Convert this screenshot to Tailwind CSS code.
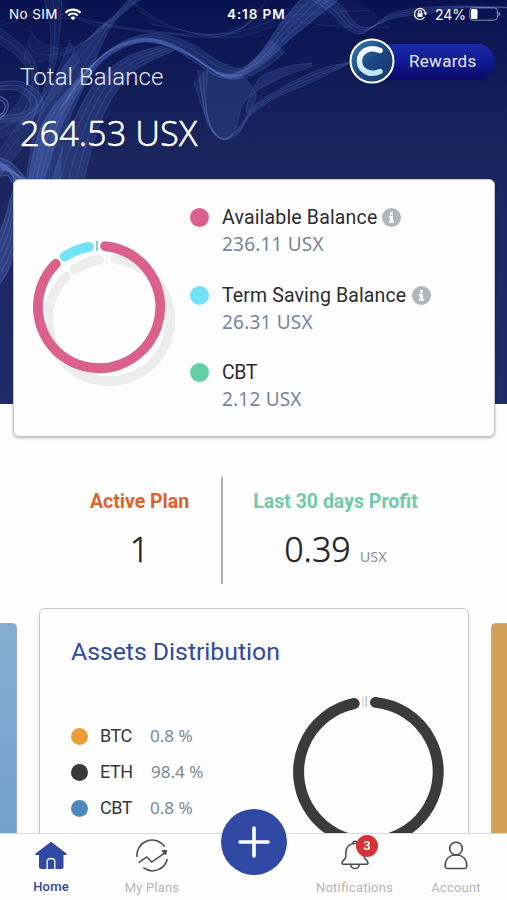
<!DOCTYPE html>
<html lang="en">
<head>
<meta charset="utf-8">
<title>Total Balance</title>
<script src="https://cdn.jsdelivr.net/npm/@tailwindcss/browser@4"></script>
</head>
<body class="bg-white">
<div class="relative flex h-[900px] w-[507px] flex-col overflow-hidden bg-[#fefefe] font-['Roboto',sans-serif]">

  <header class="relative h-[404px] shrink-0 bg-linear-to-b from-[#08124f] via-[#1a255e] via-38% to-[#202c68]">
    <!-- smoke backdrop: bundles of strands, each blended between two guide curves -->
    <svg id="smoke" class="absolute inset-0 blur-[0.7px]" width="507" height="404" viewBox="0 0 507 404" fill="none" stroke="#86a4f0" stroke-width="1.3"></svg>

    <div class="relative flex h-[28px] items-center text-[14px] text-white">
      <span class="ml-[9px] w-[55px] whitespace-nowrap font-['Inter',sans-serif] text-[13.5px] tracking-[0.4px]">No SIM</span>
      <svg width="18" height="13" viewBox="0 0 17 13" fill="none" stroke="#fff" stroke-width="2.1"><path d="M1 4.700a10.600 10.600 0 0 1 15 0M3.700 7.500a6.800 6.800 0 0 1 9.600 0"/><path d="M8.500 12.300L6 9.700a3.500 3.500 0 0 1 5 0Z" fill="#fff" stroke="none"/></svg>
      <span class="ml-[145px] w-[60px] whitespace-nowrap font-['Inter',sans-serif] text-[13.5px] font-semibold tracking-[0.9px]">4:18 PM</span>
      <svg class="ml-[126px]" width="15" height="14" viewBox="0 0 15 14" fill="none" stroke="#fff" stroke-width="1.2"><path d="M11.600 10A5.500 5.500 0 1 1 12.400 6"/><path d="M10.500 5.800h4l-2 2.600z" fill="#fff" stroke="none"/><rect x="4.500" y="6.200" width="5" height="3.800" fill="#fff" stroke="none"/><path d="M5.500 6.500V5.200a1.500 1.500 0 0 1 3 0v1.300"/></svg>
      <span class="ml-[7px] w-[34px] whitespace-nowrap font-['Inter',sans-serif] text-[14px]">24%</span>
      <svg width="32" height="14" viewBox="0 0 32 14"><rect x=".8" y=".8" width="27.500" height="12.400" rx="3" fill="none" stroke="#8890ad"/><rect x="2" y="2" width="6.500" height="10" rx="1.500" fill="#fff"/><path d="M29.500 4.800q2 .4 2 2.200t-2 2.200z" fill="#7780a2"/></svg>
    </div>

    <div class="relative flex h-[151px] justify-between">
      <div class="ml-[20px] flex flex-col text-white">
        <div class="mt-[35px] text-[24px] leading-[28px] font-light tracking-[0.1px] whitespace-nowrap text-[#e6eaf8]">Total Balance</div>
        <div class="mt-[20px] font-['Noto_Sans',sans-serif] text-[34.300px] leading-[44px] font-light whitespace-nowrap [-webkit-text-stroke:0.4px]">264.53 USX</div>
      </div>
      <div class="relative mt-[16px] mr-[12px] flex h-[36px] w-[125px] items-center rounded-full bg-linear-to-b from-[#1b2ba8] via-[#101a92] to-[#0a0868] pl-[39px] text-[17px] tracking-[0.3px] text-[#e6e9ff] shadow-sm">
        Rewards
        <svg class="absolute -top-[6px] -left-[21px]" width="46" height="46" viewBox="0 0 46 46"><defs><linearGradient id="coin" x1="0" y1="0" x2="1" y2="1"><stop stop-color="#3c83b8"/><stop offset=".5" stop-color="#1c4683"/><stop offset="1" stop-color="#17366e"/></linearGradient><linearGradient id="cee" x1="0" y1="0" x2="0" y2="1"><stop stop-color="#fff"/><stop offset="1" stop-color="#bfe6fb"/></linearGradient></defs><circle cx="23" cy="23" r="21.500" fill="url(#coin)" stroke="#fff" stroke-width="2"/><path d="M31 12.500C20 7.500 10.500 14 10.500 23S20 38.500 31 33.500" fill="none" stroke="url(#cee)" stroke-width="5.500" stroke-linecap="round"/></svg>
      </div>
    </div>

    <section class="relative mr-[12px] ml-[13px] flex h-[258px] rounded-[6px] border border-[#c6c8ce] bg-[#fefefe] shadow-[0_1px_3px_rgba(0,0,0,0.3)]">
      <svg class="mt-[52px] ml-[12px] shrink-0" width="158" height="158" viewBox="26 232 158 158" fill="none" stroke-width="9.800" stroke-linecap="round">
        <g transform="translate(10 13)" stroke="#ededee"><path d="M105 246.100A61.200 61.200 0 1 1 55.700 263.900"/><path d="M64.800 256.500A61.200 61.200 0 0 1 89 246.900"/><path d="M97 241v10" stroke-width="1.500" stroke-linecap="butt"/></g>
        <path d="M105 246.100A61.200 61.200 0 1 1 55.700 263.900" stroke="#db618c"/>
        <path d="M64.800 256.500A61.200 61.200 0 0 1 89 246.900" stroke="#72e2f8"/>
        <path d="M97 241v10" stroke="#62cfa8" stroke-width="1.600" stroke-linecap="butt"/>
      </svg>
      <div class="mt-[24px] ml-[6px] flex flex-col gap-[24.500px] text-[19.500px] leading-[27px] text-[#2c2c2e]">
        <div class="grid grid-cols-[32px_auto] items-center whitespace-nowrap">
          <i class="size-[19px] rounded-full bg-[#db618c]"></i>
          <div class="flex items-center gap-[5px] tracking-[0.17px]">Available Balance<svg width="19" height="19" viewBox="0 0 19 19"><circle cx="9.500" cy="9.500" r="9.500" fill="#b3b5b9"/><path d="M8 4.300h3v2.500H8zM7 7.800h4v5h1v1.900H7v-1.900h1V9.700H7z" fill="#fff"/></svg></div>
          <div class="col-start-2 font-['Noto_Sans',sans-serif] text-[19px] leading-[26px] tracking-[0.2px] text-[#78849a]">236.11 USX</div>
        </div>
        <div class="grid grid-cols-[32px_auto] items-center whitespace-nowrap">
          <i class="size-[19px] rounded-full bg-[#72e2f8]"></i>
          <div class="flex items-center gap-[6px] tracking-[0.13px]">Term Saving Balance<svg width="19" height="19" viewBox="0 0 19 19"><circle cx="9.500" cy="9.500" r="9.500" fill="#b3b5b9"/><path d="M8 4.300h3v2.500H8zM7 7.800h4v5h1v1.900H7v-1.900h1V9.700H7z" fill="#fff"/></svg></div>
          <div class="col-start-2 font-['Noto_Sans',sans-serif] text-[19px] leading-[26px] tracking-[0.2px] text-[#78849a]">26.31 USX</div>
        </div>
        <div class="grid grid-cols-[32px_auto] items-center whitespace-nowrap">
          <i class="size-[19px] rounded-full bg-[#62cfa8]"></i>
          <div class="tracking-[-0.4px]">CBT</div>
          <div class="col-start-2 font-['Noto_Sans',sans-serif] text-[19px] leading-[26px] tracking-[0.2px] text-[#78849a]">2.12 USX</div>
        </div>
      </div>
    </section>
  </header>

  <section class="mt-[73px] flex h-[107px] shrink-0">
    <div class="ml-[58px] flex w-[165px] flex-col items-center border-r-2 border-[#adaeb2]">
      <div class="mt-[12px] text-[19.500px] leading-[26px] font-bold text-[#e0622d]">Active Plan</div>
      <div class="mt-[11px] font-['Noto_Sans',sans-serif] text-[34px] leading-[46px] font-light text-[#232326] [-webkit-text-stroke:0.4px]">1</div>
    </div>
    <div class="flex w-[225px] flex-col items-center">
      <div class="mt-[12px] text-[19.500px] leading-[26px] font-bold text-[#70cba8]">Last 30 days Profit</div>
      <div class="mt-[11px] flex items-baseline gap-[9px] font-['Noto_Sans',sans-serif] text-[34px] leading-[46px] font-light text-[#232326] [-webkit-text-stroke:0.4px]">0.39<span class="text-[14.500px] font-normal text-[#8791a0] [-webkit-text-stroke:0px]">USX</span></div>
    </div>
  </section>

  <section class="mt-[24px] flex h-[225px] shrink-0 items-start overflow-hidden">
    <div class="mt-[15px] h-[240px] w-[17px] shrink-0 rounded-tr-[5px] border-t border-r border-[#9ba9b8] bg-linear-to-b from-[#86add2] to-[#709fc9] shadow-md"></div>
    <div class="relative ml-[22px] h-[260px] w-[430px] shrink-0 rounded-[6px] border-[1.500px] border-[#c4c5c9] bg-[#fefefe] px-[31px] shadow-md">
      <h2 class="mt-[27px] text-[24.800px] leading-[32px] tracking-[-0.02px] whitespace-nowrap text-[#3049a4]">Assets Distribution</h2>
      <div class="flex justify-between">
        <div class="mt-[50px] flex flex-col text-[18px] leading-[36px] whitespace-nowrap text-[#38383a]">
          <div class="flex items-center"><i class="size-[17px] rounded-full bg-[#ee9d35]"></i><span class="ml-[12px] w-[50px] tracking-[-0.5px]">BTC</span><span class="font-['Noto_Sans',sans-serif] text-[17px] text-[#7d889a]">0.8 %</span></div>
          <div class="flex items-center"><i class="size-[17px] rounded-full bg-[#39393a]"></i><span class="ml-[12px] w-[51px] tracking-[-0.5px]">ETH</span><span class="font-['Noto_Sans',sans-serif] text-[17px] text-[#7d889a]">98.4 %</span></div>
          <div class="flex items-center"><i class="size-[17px] rounded-full bg-[#4f87bf]"></i><span class="ml-[12px] w-[50px] tracking-[-0.5px]">CBT</span><span class="font-['Noto_Sans',sans-serif] text-[17px] text-[#7d889a]">0.8 %</span></div>
        </div>
        <svg class="mt-[24px] -mr-[7px] shrink-0" width="152" height="160" viewBox="292 692 152 160" fill="none" stroke-width="11" stroke-linecap="round"><path d="M375.500 702.400A69.800 69.800 0 1 1 354.200 703.500" stroke="#3b3b3b"/><path d="M363 696.500v10" stroke="#f4d9a5" stroke-width="1.700" stroke-linecap="butt"/><path d="M366.300 696v11" stroke="#b7d5ee" stroke-width="2" stroke-linecap="butt"/></svg>
      </div>
    </div>
    <div class="mt-[15px] ml-[22px] h-[240px] w-[20px] shrink-0 rounded-tl-[5px] border-t border-l border-[#c3b095] bg-[#d3a05a] shadow-md"></div>
  </section>

  <nav class="relative grid h-[67px] grid-cols-[101px_102px_101px_101px_102px] border-t border-[#d9dade] bg-[#fefefe] text-[13px] leading-[18px] tracking-[0.2px] text-[#b4b6ba]">
    <div class="flex flex-col items-center pl-[1px] text-[#3049a4]">
      <svg class="mt-[7px]" width="32" height="29" viewBox="0 0 32 29"><path d="M16 .8L31.500 12.500Q32.500 14 30.500 14H28.500V25.500Q28.500 28 26 28H6.500Q4 28 4 25.500V14H1.500Q-.5 14 .5 12.500Z" fill="#3049a4"/><path d="M12.200 28v-7.500q0-3 3.800-3t3.800 3V28" fill="none" stroke="#fff" stroke-width="1.300"/></svg>
      <span class="mt-[8px] font-medium">Home</span>
    </div>
    <div class="flex flex-col items-center">
      <svg class="mt-[4px]" width="34" height="34" viewBox="0 0 34 34" fill="none" stroke="#4a4a4d" stroke-width="1.500"><path d="M2 19A15.200 15.200 0 0 1 29.700 8.700M8.300 29.700A15.200 15.200 0 0 0 32.300 21"/><path d="M3.700 24.700l8-5.800 5 5.200 12.800-9"/><path d="M27 12.800l4.600-.5-.8 4.400z" fill="#4a4a4d" stroke-width="1"/></svg>
      <span class="mt-[7px]">My Plans</span>
    </div>
    <div class="relative"><svg class="absolute -top-[25px] left-[18px]" width="66" height="66" viewBox="0 0 66 66"><circle cx="33" cy="33" r="33" fill="#3049a4"/><path d="M19 33h28M33 19v28" stroke="#fff" stroke-width="3.600" stroke-linecap="round"/></svg></div>
    <div class="relative flex flex-col items-center">
      <svg class="mt-[6px]" width="30" height="30" viewBox="0 0 30 30" fill="none" stroke="#4a4a4d" stroke-width="1.500" stroke-linejoin="round"><path d="M13 4V2.800q0-1.600 2-1.600t2 1.600V4"/><path d="M15 3.500C8.500 3.500 5.800 8 5.800 13.500V17C5.800 19 2 20.500 2 23q0 1.300 1.300 1.300H26.700Q28 24.300 28 23C28 20.500 24.200 19 24.200 17v-3.500C24.200 8 21.500 3.500 15 3.500Z"/><path d="M10.500 24.300q1 4.200 4.500 4.200t4.500-4.200"/></svg>
      <span class="mt-[9px] whitespace-nowrap">Notifications</span>
      <b class="absolute top-[1px] left-[52px] flex size-[22px] items-center justify-center rounded-full bg-[#d93236] font-['Inter',sans-serif] text-[12px] font-semibold text-white">3</b>
    </div>
    <div class="flex flex-col items-center">
      <svg class="mt-[7px]" width="24" height="29" viewBox="0 0 24 29" fill="none" stroke="#4a4a4d" stroke-width="1.600"><circle cx="12" cy="7.500" r="6.300"/><path d="M4 27.500Q1 27.500 1.200 24C1.500 18 5.500 14 12 14S22.500 18 22.800 24Q23 27.500 20 27.500Z"/></svg>
      <span class="mt-[9px]">Account</span>
    </div>
  </nav>
</div>
<script>
  // each bundle: first guide, last guide, strand count, strand opacity, veil opacity
  const bundles = [
    [[28,180,42,125,75,82,110,50,145,38,180,48,222,74,252,62,282,22,300,0],[44,180,62,125,88,78,115,52,150,42,190,56,228,78,258,66,295,35,338,0],5,.16,.24],
    [[70,98,90,68,115,46,145,34,170,36,195,46,220,62,240,68,256,58,272,40],[58,112,84,74,112,50,142,42,168,46,192,60,216,76,238,79,262,70,285,52],4,.13,.17],
    [[26,180,36,125,60,72,92,35,112,18,128,0],[60,180,66,130,88,78,104,40,118,18,140,0],4,.1,.2],
    [[52,180,62,150,78,112,96,82,125,58,160,46],[84,180,92,148,102,118,116,92,138,68,175,50],5,.14,.18],
    [[194,82,204,112,214,134,226,138,240,126,256,104,285,86,318,70,350,62],[208,68,206,100,210,124,222,139,238,134,250,116,275,98,312,82,348,64],4,.13,.12],
    [[198,70,202,96,208,125,224,140,236,128,242,106,255,92,285,76,312,66],[240,74,250,84,256,96,250,110,246,112,250,96,262,76,290,66,312,63],2,.12,.16],
    [[312,0,330,12,346,28,360,34,374,26,390,14,420,8,460,6,507,7],[330,0,342,6,354,22,366,28,378,24,394,18,424,14,462,8,507,8],4,.14,.12],
    [[150,24,180,30,220,38,252,34,290,22,330,26,390,28],[130,0,170,26,215,34,250,22,285,10,320,0,350,-8],3,.09,.06],
    [[44,0,50,25,50,58,44,88,28,130],[62,0,60,28,56,60,48,88,34,114],3,.12,.1],
    [[58,0,85,22,120,28,165,32,210,38,248,24,266,0],[0,26,40,14,80,18,130,30,190,34,236,32,254,14],3,.1,.04],
    [[26,50,25,60,38,62,60,57,82,44,100,26],[30,30,40,42,60,48,78,44,96,34,120,10],3,.1,.07],
    [[0,82,22,82,40,94,42,108,26,120,0,122],[0,90,16,90,28,98,30,108,18,114,0,116],3,.18,.12],
    [[0,100,4,103,5,108,3,113,0,115],[0,96,7,101,8,108,5,114,0,118],2,.4,.12],
    [[0,44,12,52,24,64,28,78,22,96,10,112,0,120],[0,28,18,42,34,60,38,78,38,100,24,126,0,138],3,.1,.12],
    [[0,162,10,170,14,185,10,200,6,215,0,232],[0,168,20,176,28,184,22,206,12,260,0,284],6,.2,.26],
    [[0,158,10,162,20,172,30,184],[0,176,8,176,12,182,18,188],4,.26,.2],
    [[0,150,14,130,30,112,44,96,58,70,70,40],[0,176,20,150,34,128,44,110,60,88,80,60],3,.1,.12]
  ];
  // smooth path through the points
  function curve(p) {
    const n = p.length / 2, at = i => { i = Math.max(0, Math.min(n - 1, i)); return [p[2*i], p[2*i+1]]; };
    let d = '';
    for (let i = 0; i < n - 1; i++) {
      const a = at(i-1), b = at(i), c = at(i+1), e = at(i+2);
      d += `C${b[0]+(c[0]-a[0])/6} ${b[1]+(c[1]-a[1])/6} ${c[0]-(e[0]-b[0])/6} ${c[1]-(e[1]-b[1])/6} ${c[0]} ${c[1]}`;
    }
    return d;
  }
  let out = '';
  for (const [a, b, n, line, veil] of bundles) {
    const back = [];
    for (let i = b.length - 2; i >= 0; i -= 2) back.push(b[i], b[i+1]);
    out += `<path d="M${a[0]} ${a[1]}${curve(a)}L${back[0]} ${back[1]}${curve(back)}Z" fill="#6486dc" fill-opacity="${veil}" stroke="none"/>`;
    for (let k = 0; k < n; k++) {
      const t = k / (n - 1), p = a.map((v, i) => v + (b[i] - v) * t);
      out += `<path d="M${p[0]} ${p[1]}${curve(p)}" stroke-opacity="${line}"/>`;
    }
  }
  document.getElementById('smoke').innerHTML = out;
</script>
</body>
</html>
